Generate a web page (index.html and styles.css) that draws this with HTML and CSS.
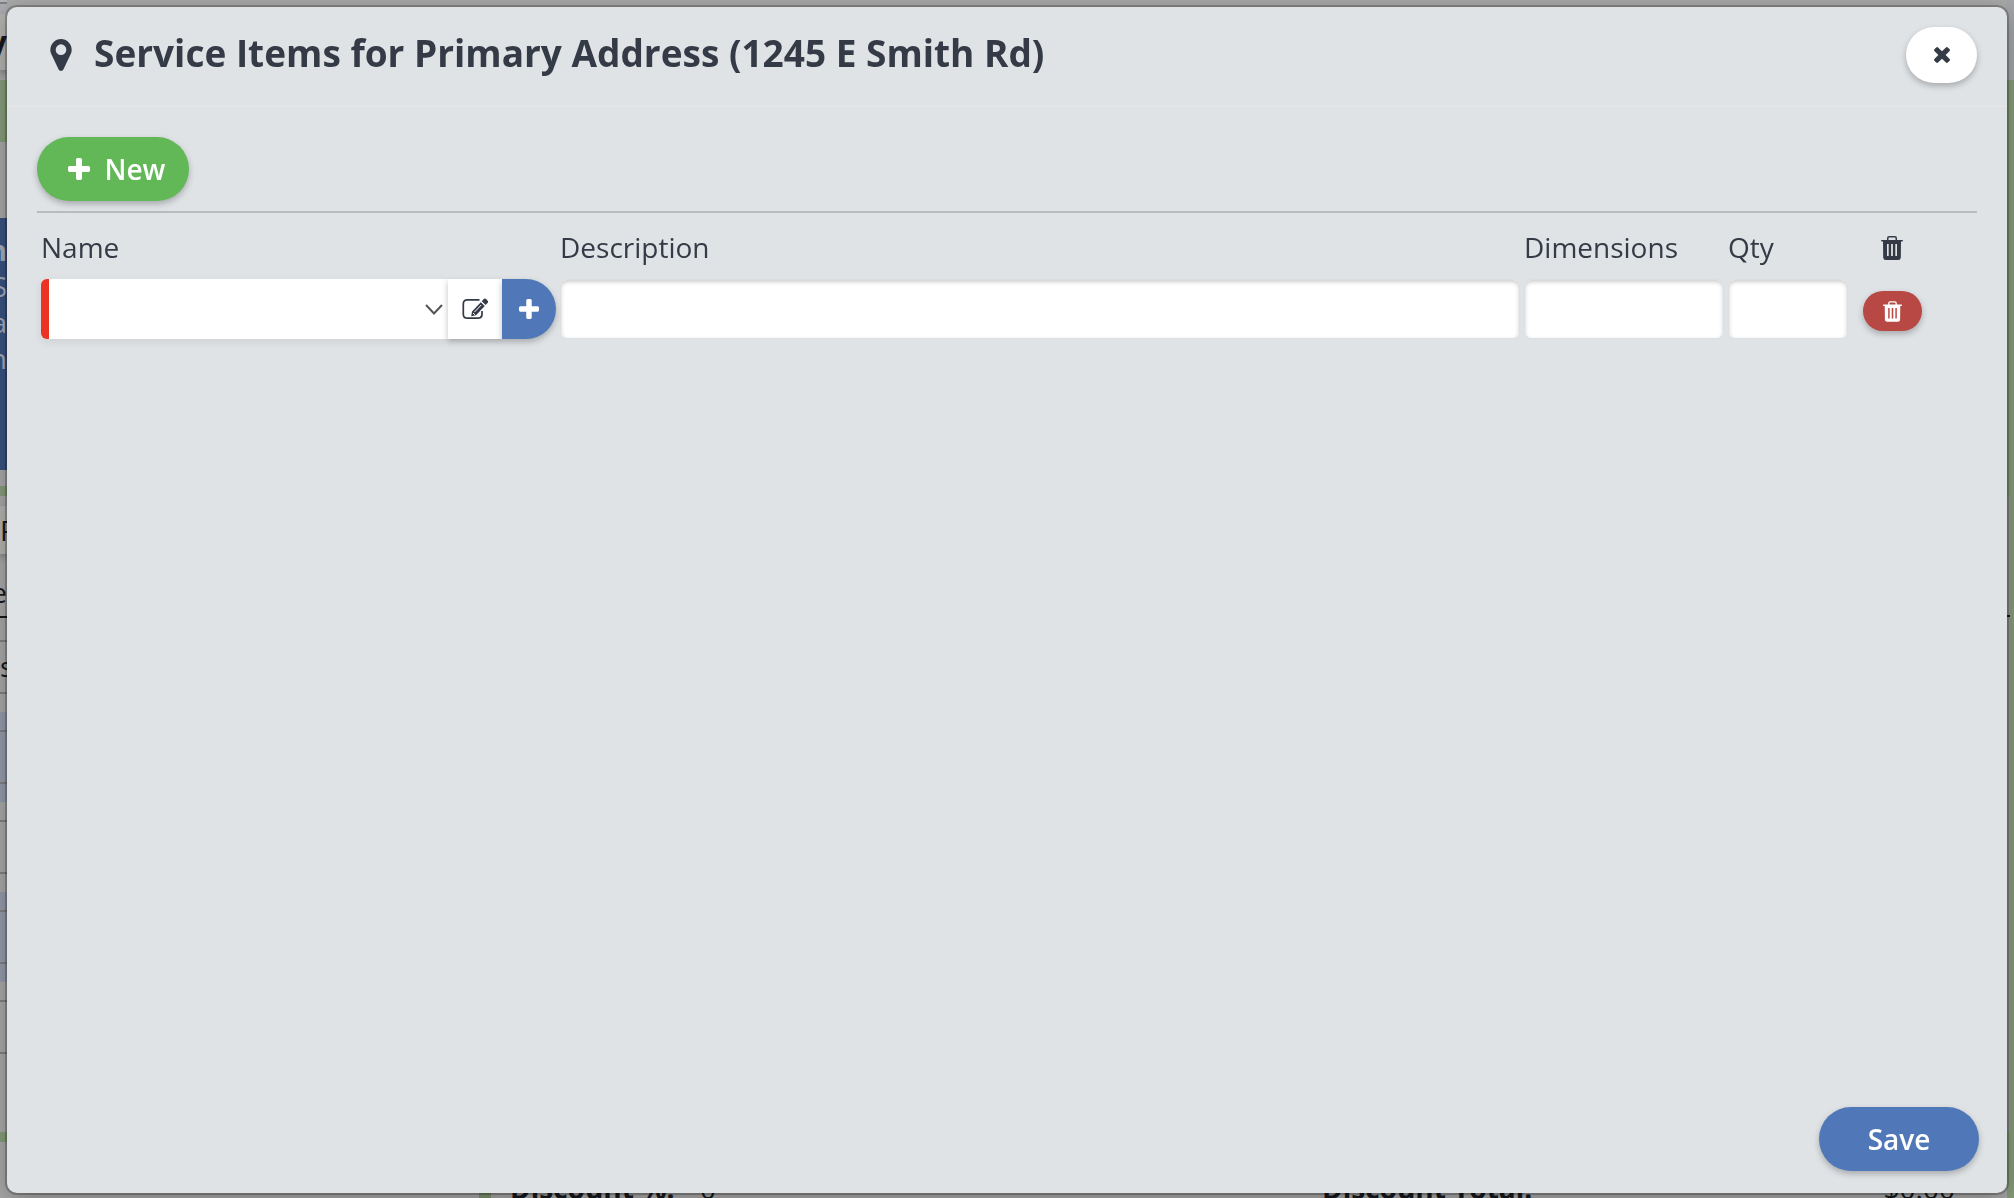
FILE: index.html
```html
<!DOCTYPE html>
<html lang="en">
<head>
<meta charset="utf-8">
<title>Service Items</title>
<link rel="stylesheet" href="styles.css">
</head>
<body>
<svg width="0" height="0" class="sprite" aria-hidden="true">
  <symbol id="plus" viewBox="192 128 1408 1408"><path d="M1600 736v192q0 40-28 68t-68 28h-416v416q0 40-28 68t-68 28h-192q-40 0-68-28t-28-68v-416h-416q-40 0-68-28t-28-68v-192q0-40 28-68t68-28h416v-416q0-40 28-68t68-28h192q40 0 68 28t28 68v416h416q40 0 68 28t28 68z"/></symbol>
  <symbol id="times" viewBox="302 366 1188 1188"><path d="M1490 1322q0 40-28 68l-136 136q-28 28-68 28t-68-28l-294-294-294 294q-28 28-68 28t-68-28l-136-136q-28-28-28-68t28-68l294-294-294-294q-28-28-28-68t28-68l136-136q28-28 68-28t68 28l294 294 294-294q28-28 68-28t68 28l136 136q28 28 28 68t-28 68l-294 294 294 294q28 28 28 68z"/></symbol>
  <symbol id="marker" viewBox="384 128 1024 1536"><path d="M1152 640q0-106-75-181t-181-75-181 75-75 181 75 181 181 75 181-75 75-181zm256 0q0 109-33 179l-364 774q-16 33-47.5 52t-67.5 19-67.5-19-46.5-52l-365-774q-33-70-33-179 0-212 150-362t362-150 362 150 150 362z"/></symbol>
  <symbol id="trash" viewBox="0 0 22 24"><path fill-rule="evenodd" d="M6 4V2.200Q6 0 8.200 0h5.600Q16 0 16 2.200V4h5.300q.7 0 .7.800t-.7.800H20L19.800 21.500Q19.700 24 17.200 24H4.800Q2.300 24 2.200 21.500L2 5.600H.7Q0 5.600 0 4.800T.7 4zM7.500 4h7V2.300q0-.8-.8-.8H8.300q-.8 0-.8.800zM6 8v12h1.700V8zM10.100 8v12h1.800V8zM14.300 8v12H16V8z"/></symbol>
  <symbol id="edit" viewBox="0 0 26 22"><path fill="none" stroke="currentColor" stroke-width="1.700" d="M17.500 1.900H5.500Q1.300 1.900 1.300 6v10.200q0 4 4.200 4h10.300q4.200 0 4.200-4V13"/><path d="M10 13.600 18.800 4.200 22.800 8 14 17.200 9.200 18.300zM19.700 3.200l1.900-2q1.300-1.200 2.700 0l1.200 1.200q1.200 1.300 0 2.600L23.700 7z"/><path fill="none" stroke="#fff" stroke-width="1" d="M12.500 14 19.200 7M11 15l2 1.800"/></symbol>
</svg>

<div class="app" inert>
  <div class="side">
    <div class="topbar"></div>
    <div class="chip chip-top"><b>y</b></div>
    <div class="band"></div>
    <div class="card"><b>n</b><span>S</span><span>a</span><span>n</span></div>
    <div class="rule"></div>
    <div class="chip chip-tab"><span>F</span></div>
    <div class="caption">e</div>
    <div class="rows-head">s</div>
    <div class="stripe alt"><i></i></div>
    <div class="stripe"><i></i></div>
    <div class="stripe alt"><i></i></div>
    <div class="stripe"><i></i></div>
    <div class="spacer"></div>
    <div class="rule"></div>
  </div>
  <div class="edge"><div class="edge-track"></div></div>
  <div class="totals">
    <span class="mark"></span>
    <b class="pct">Discount %:</b>
    <span class="pct-value">0</span>
    <b>Discount Total:</b>
    <span class="total-value">$0.00</span>
  </div>
</div>

<main class="modal" role="dialog" aria-labelledby="title">
  <header class="modal-head">
    <svg class="icon-marker" aria-hidden="true"><use href="#marker"/></svg>
    <h1 id="title">Service Items for Primary Address (1245 E Smith Rd)</h1>
    <button class="btn close" type="button" aria-label="Close"><svg class="icon-times"><use href="#times"/></svg></button>
  </header>
  <form class="modal-body">
    <div class="toolbar">
      <button class="btn new" type="button"><svg class="icon-plus"><use href="#plus"/></svg>New</button>
    </div>
    <table class="items">
      <colgroup><col class="c-name"><col><col class="c-dim"><col class="c-qty"><col class="c-del"></colgroup>
      <thead>
        <tr><th id="h-name">Name</th><th id="h-desc">Description</th><th id="h-dim">Dimensions</th><th id="h-qty">Qty</th><th class="center" aria-label="Delete"><svg class="icon-trash"><use href="#trash"/></svg></th></tr>
      </thead>
      <tbody>
        <tr>
          <td>
            <div class="picker">
              <div class="select-wrap">
                <select aria-labelledby="h-name" required><option></option></select>
                <svg class="chevron" viewBox="0 0 18 11" aria-hidden="true"><path d="M1 1l8 8.500L17 1"/></svg>
              </div>
              <button class="edit" type="button" aria-label="Edit item"><svg class="icon-edit"><use href="#edit"/></svg></button>
              <button class="add" type="button" aria-label="Add item"><svg class="icon-add"><use href="#plus"/></svg></button>
            </div>
          </td>
          <td><input type="text" aria-labelledby="h-desc"></td>
          <td><input type="text" aria-labelledby="h-dim"></td>
          <td><input type="text" aria-labelledby="h-qty"></td>
          <td class="center last"><button class="btn delete" type="button" aria-label="Delete row"><svg class="icon-trash-small"><use href="#trash"/></svg></button></td>
        </tr>
      </tbody>
    </table>
    <footer class="modal-foot"><button class="btn save" type="submit">Save</button></footer>
  </form>
</main>
</body>
</html>
```
FILE: styles.css
```css
* { box-sizing: border-box; }

body {
  margin: 0;
  height: 100vh;
  overflow: hidden;
  font: 28px/36px "Open Sans", "Noto Sans", sans-serif;
  color: #343b46;
  background: #a8a8a8;
}

.sprite { position: absolute; }
svg { display: block; fill: currentColor; }
button, input, select { margin: 0; font: inherit; color: inherit; border: 0; }
button { padding: 0; display: flex; align-items: center; justify-content: center; }

/* Page behind the dialog */
.app {
  display: grid;
  grid-template-columns: 7px 1fr 7px;
  grid-template-rows: minmax(0, 1fr) 5px;
  height: 100vh;
}
.side { grid-row: 1 / 3; overflow: hidden; display: flex; flex-direction: column; color: #17191d; }
.side > * { flex: none; overflow: hidden; }
.topbar { height: 14px; background: linear-gradient(#b3b4b7 2px, #808184 2px 4px, #abadb1 4px); }
.chip { display: flex; align-items: center; justify-content: flex-end; background: #b4b2af; box-shadow: 0 3px 6px #777; }
.chip-top { height: 56px; font-size: 32px; }
.chip-tab { height: 48px; margin-top: 10px; justify-content: flex-start; }
.band { height: 62px; margin-top: 10px; background: #869c7a; }
.card { height: 252px; margin: 76px 0 16px; padding-top: 14px; background: #38527f; color: #a3abba; display: flex; flex-direction: column; align-items: flex-end; }
.rule { height: 10px; background: #869c7a; }
.caption { height: 64px; padding-top: 20px; border-bottom: 2px solid #17191d; display: flex; justify-content: flex-end; }
.rows-head { height: 76px; margin-top: 22px; padding-top: 6px; border-top: 2px solid #808184; background: linear-gradient(transparent 50px, #808184 50px 52px, transparent 52px); margin-bottom: -4px; }
.stripe { height: 90px; padding: 18px 0; }
.stripe i { display: block; height: 54px; border: solid #808184; border-width: 2px 0; }
.alt { background: #949ba9; }
.side .spacer { flex: 0 1 60px; }
.edge { grid-column: 3; grid-row: 1 / 3; padding-top: 497px; background: linear-gradient(#a4a5a9 80px, #869c7a 80px); }
.edge-track { width: 3px; height: 635px; background: linear-gradient(#96979a 118px, #17191d 118px 120px, #96979a 120px); }
.totals {
  grid-column: 2; grid-row: 2;
  display: flex; align-items: flex-end;
  height: 5px;
  padding: 0 52px 0 472px;
  line-height: 20px;
  overflow: hidden;
  color: #17191d;
  background: #a8a8a8;
}
.mark { width: 12px; height: 5px; margin-right: 19px; background: #7d9471; }
.pct { width: 190px; }
.pct-value { width: 622px; }
.total-value { margin-left: auto; }

/* Dialog */
.modal {
  position: fixed;
  inset: 7px 7px 5px;
  display: flex;
  flex-direction: column;
  border-radius: 10px;
  background: #dfe3e6;
  box-shadow: 0 0 0 2px rgba(0, 0, 0, .22), 0 6px 24px rgba(0, 0, 0, .3);
}
.modal-head {
  display: flex;
  align-items: center;
  height: 100px;
  padding: 0 30px 2px 43px;
  border-bottom: 2px solid #e5e5e5;
}
.icon-marker { width: 22px; height: 32px; margin-right: 22px; }
h1 { margin: 0; padding-bottom: 4px; font-size: 37px; line-height: 52px; font-weight: 700; }
.btn { color: #fff; font-weight: 600; border-radius: 32px; box-shadow: 0 3px 6px rgba(0, 0, 0, .25); }
.close { width: 71px; height: 56px; margin-left: auto; background: #fff; color: #343b46; }
.icon-times { width: 16px; height: 16px; }

.modal-body { flex: 1; display: flex; flex-direction: column; padding: 30px 30px 22px; }
.toolbar { padding-bottom: 10px; border-bottom: 2px solid #b9bab9; }
.new { gap: 15px; width: 152px; height: 64px; padding-left: 7px; background: #62b757; }
.icon-plus { width: 22px; height: 22px; }

.items { table-layout: fixed; width: calc(100% - 41px); margin-top: 14px; border-spacing: 0; }
.c-name { width: 519px; }
.c-dim { width: 204px; }
.c-qty { width: 124px; }
.c-del { width: 88px; }
th, td { padding: 0 0 0 4px; text-align: left; font-weight: 400; }
th { height: 42px; padding-bottom: 2px; vertical-align: middle; }
td { padding-top: 10px; vertical-align: middle; }
.center { padding-left: 0; padding-bottom: 0; }
.last { padding-top: 14px; }
.center > * { margin: 0 auto; }
.icon-trash { width: 22px; height: 24px; }

.picker { display: flex; height: 60px; }
.select-wrap { position: relative; flex: 1; }
select {
  appearance: none;
  width: 100%;
  height: 60px;
  padding: 0 40px 0 12px;
  border-left: 8px solid #ec3323;
  border-radius: 6px 0 0 6px;
  background: #fff;
  box-shadow: 0 3px 10px rgba(0, 0, 0, .08);
}
.chevron { position: absolute; right: 5px; top: 25px; width: 18px; height: 11px; fill: none; stroke: #555; stroke-width: 2; pointer-events: none; }
.edit, .add { position: relative; width: 54px; height: 60px; box-shadow: 0 3px 6px rgba(0, 0, 0, .25); }
.edit { background: #fff; }
.icon-edit { width: 26px; height: 22px; }
.add { background: #5078b9; color: #fff; border-radius: 0 30px 30px 0; }
.icon-add { width: 20px; height: 20px; }
input {
  display: block;
  width: 100%;
  height: 60px;
  padding: 0 12px;
  border: 1px solid #dcdfe1;
  border-radius: 7px;
  background: #fff;
  box-shadow: inset 0 2px 4px rgba(0, 0, 0, .2);
}
.delete { width: 59px; height: 40px; background: #b84843; }
.icon-trash-small { width: 19px; height: 21px; }

.modal-foot { display: flex; justify-content: flex-end; margin: auto -2px 0 0; }
.save { width: 160px; height: 64px; background: #5078b9; }
```
